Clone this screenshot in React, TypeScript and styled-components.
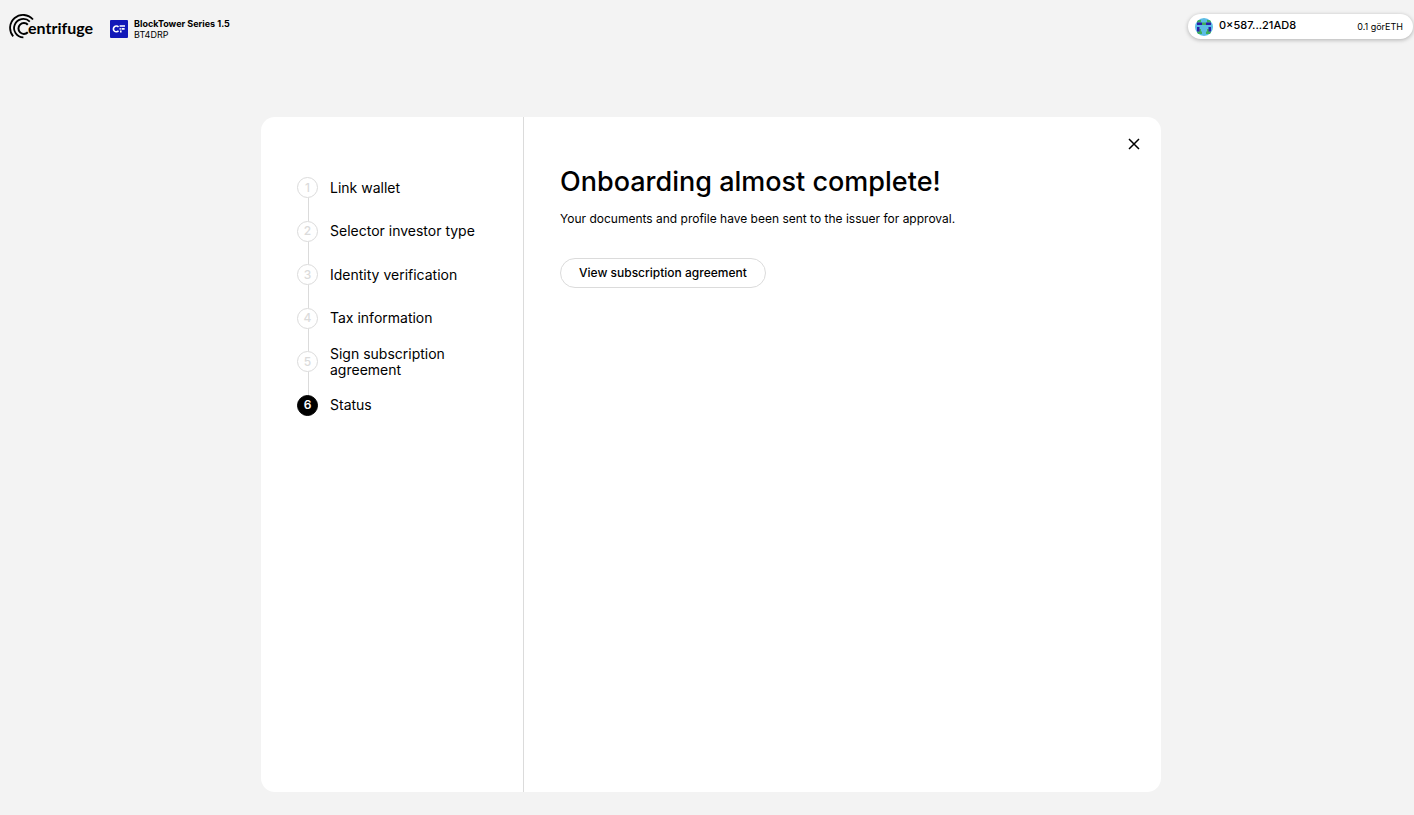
import React from "react";
import styled, { createGlobalStyle } from "styled-components";

const GlobalStyle = createGlobalStyle`
  *, *::before, *::after { box-sizing: border-box; }
  body {
    margin: 0;
    background: #f3f3f3;
    color: #000;
    font-family: Inter, "Liberation Sans", sans-serif;
  }
`;

const Page = styled.div`
  min-height: 100vh;
  display: flex;
  flex-direction: column;
  padding: 14px 0 23px 8px;
`;

const Header = styled.header`
  display: flex;
  align-items: flex-start;
  justify-content: space-between;
  padding-right: 1px;
  margin-bottom: 77px;
`;

const Brand = styled.div`
  display: flex;
  align-items: flex-start;
  gap: 16px;
`;

const LogoLink = styled.a`
  display: block;
  height: 26px;
  color: inherit;

  svg { display: block; }
`;

const Wordmark = styled.text`
  font-family: Lato, sans-serif;
  font-size: 16px;
  font-weight: 700;
`;

const Pool = styled.div`
  display: flex;
  align-items: center;
  gap: 6px;
  padding-top: 4px;
  font-size: 9px;
  line-height: 11px;

  svg { display: block; }
`;

const PoolName = styled.div`
  font-weight: 700;
`;

const Wallet = styled.button`
  display: flex;
  align-items: center;
  gap: 6px;
  width: 225px;
  height: 25px;
  padding: 0 10px 0 7px;
  border: 0;
  border-radius: 13px;
  background: #fff;
  color: inherit;
  font: 500 11px/14px Inter, sans-serif;
  box-shadow: 0 1px 4px rgba(0, 0, 0, 0.28);
  cursor: pointer;
`;

const Address = styled.span`
  padding-bottom: 3px;
`;

const Balance = styled.span`
  margin-left: auto;
  font-size: 9px;
  font-weight: 400;
`;

const Card = styled.main`
  flex: 1;
  display: grid;
  grid-template-columns: 263px 1fr;
  width: 100%;
  max-width: 900px;
  margin: 0 auto;
  border-radius: 14px;
  background: #fff;
`;

const Sidebar = styled.nav`
  padding: 60px 36px;
  border-right: 1px solid #dbdbdb;
`;

const Steps = styled.ol`
  display: flex;
  flex-direction: column;
  height: 239px;
  margin: 0;
  padding: 0;
  list-style: none;
`;

const StepItem = styled.li`
  flex: 1;
  display: grid;
  grid-template-columns: 21px 1fr;
  grid-template-rows: 21px 1fr;
  column-gap: 12px;
  justify-items: center;
  align-items: center;

  &:last-child { flex: none; }

  &:not(:last-child)::after {
    content: "";
    width: 1px;
    height: 100%;
    margin-left: 1px;
    background: #dbdbdb;
  }
`;

const StepNumber = styled.span<{ $active: boolean }>`
  display: flex;
  align-items: center;
  justify-content: center;
  width: 21px;
  height: 21px;
  border: 1px solid ${(p) => (p.$active ? "#000" : "#dbdbdb")};
  border-radius: 50%;
  background: ${(p) => (p.$active ? "#000" : "#fff")};
  color: ${(p) => (p.$active ? "#fff" : "#dbdbdb")};
  font-size: 12px;
  font-weight: ${(p) => (p.$active ? 600 : 500)};
  line-height: 16px;
`;

const StepLabel = styled.span`
  justify-self: start;
  display: flex;
  align-items: center;
  height: 21px;
  font-size: 14px;
  line-height: 16px;
`;

const Content = styled.section`
  display: flex;
  flex-direction: column;
  align-items: flex-start;
  padding: 18px 18px 36px 36px;
`;

const CloseButton = styled.button`
  align-self: flex-end;
  display: block;
  padding: 0;
  border: 0;
  background: none;
  color: inherit;
  cursor: pointer;

  svg { display: block; }
`;

const Title = styled.h1`
  margin: 11px 0 0;
  font-size: 27px;
  font-weight: 500;
  line-height: 36px;
`;

const Message = styled.p`
  margin: 10px 0 0;
  font-size: 12px;
  line-height: 18px;
`;

const OutlineButton = styled.button`
  height: 30px;
  margin-top: 30px;
  padding: 0 18px;
  border: 1px solid #dbdbdb;
  border-radius: 15px;
  background: #fff;
  color: inherit;
  font: 500 12px/16px Inter, sans-serif;
  cursor: pointer;
`;

const steps = [
  "Link wallet",
  "Selector investor type",
  "Identity verification",
  "Tax information",
  "Sign subscription agreement",
  "Status",
];
const activeStep = 5;

const CentrifugeLogo = () => (
  <svg width="86" height="26" viewBox="0 0 86 26">
    <g fill="none" stroke="currentColor" strokeWidth="1.8">
      <path d="M25 5.5A12.9 12.9 0 0 0 5.2 22.4" />
      <path d="M21.8 7.6A9.2 9.2 0 1 0 15.4 23.3" />
      <path d="M19.8 10.8A5.4 5.4 0 1 0 19.8 18.2" strokeWidth="2" />
    </g>
    <Wordmark x="20" y="20" fill="currentColor">entrifuge</Wordmark>
  </svg>
);

const PoolIcon = () => (
  <svg width="18" height="18" viewBox="0 0 18 18" aria-hidden="true">
    <rect width="18" height="18" rx="1" fill="#1219b8" />
    <g fill="none" stroke="#fff" strokeWidth="1.6">
      <path d="M8.5 7A2.9 2.9 0 1 0 8.5 10.8" />
      <path d="M9.6 6H15M11.6 8.9H14.6M9.6 8.9H10.8M10.8 10.4V12.4" />
    </g>
  </svg>
);

const Identicon = () => (
  <svg width="18" height="18" viewBox="0 0 18 18" aria-hidden="true">
    <clipPath id="avatar">
      <circle cx="9" cy="9" r="9" />
    </clipPath>
    <g clipPath="url(#avatar)">
      <path fill="#5bbce4" d="M0 0H18V18H0Z" />
      <path fill="#3fae5c" d="M2 2H6V4.500H2ZM12 2H16V4.500H12ZM7 4.500H11V7H7ZM4 11H6V16H4ZM12 11H14V16H12ZM2 13.500H7V16H2ZM11 13.500H16V16H11Z" />
      <path fill="#2a1fa8" d="M2 4.500H7V7H2ZM11 4.500H16V7H11ZM2 9H4.500V13.500H2ZM13.500 9H16V13.500H13.500Z" />
    </g>
  </svg>
);

export default function App() {
  return (
    <>
      <GlobalStyle />
      <Page>
        <Header>
          <Brand>
            <LogoLink href="#" aria-label="Centrifuge">
              <CentrifugeLogo />
            </LogoLink>
            <Pool>
              <PoolIcon />
              <div>
                <PoolName>BlockTower Series 1.5</PoolName>
                <div>BT4DRP</div>
              </div>
            </Pool>
          </Brand>
          <Wallet type="button">
            <Identicon />
            <Address>0×587...21AD8</Address>
            <Balance>0.1 görETH</Balance>
          </Wallet>
        </Header>
        <Card>
          <Sidebar aria-label="Onboarding steps">
            <Steps>
              {steps.map((label, i) => (
                <StepItem key={label} aria-current={i === activeStep ? "step" : undefined}>
                  <StepNumber $active={i === activeStep}>{i + 1}</StepNumber>
                  <StepLabel>{label}</StepLabel>
                </StepItem>
              ))}
            </Steps>
          </Sidebar>
          <Content>
            <CloseButton type="button" aria-label="Close">
              <svg width="18" height="18" viewBox="0 0 18 18" fill="none" stroke="currentColor" strokeWidth="1.5">
                <path d="M4 4L14 14M14 4L4 14" />
              </svg>
            </CloseButton>
            <Title>Onboarding almost complete!</Title>
            <Message>Your documents and profile have been sent to the issuer for approval.</Message>
            <OutlineButton type="button">View subscription agreement</OutlineButton>
          </Content>
        </Card>
      </Page>
    </>
  );
}
